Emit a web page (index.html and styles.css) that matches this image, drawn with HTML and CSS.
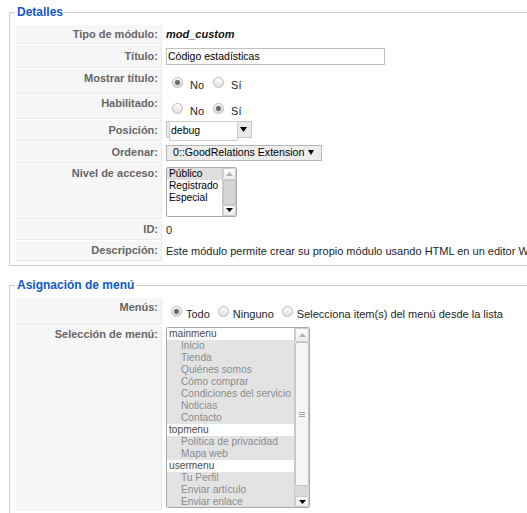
FILE: index.html
```html
<!DOCTYPE html>
<html lang="es">
<head>
<meta charset="utf-8">
<title>Módulo</title>
<link rel="stylesheet" href="styles.css">
</head>
<body>
<div class="page">
  <fieldset class="panel">
    <legend class="panel-title">Detalles</legend>
    <div class="admintable details">
      <div class="key">Tipo de módulo:</div>
      <div class="val"><strong class="type">mod_custom</strong></div>

      <div class="key">Título:</div>
      <div class="val"><span class="textbox">Código estadísticas</span></div>

      <div class="key key-top">Mostrar título:</div>
      <div class="val val-radios">
        <div class="radio-group wide">
          <span class="radio checked"></span><span class="opt-label">No</span>
          <span class="radio"></span><span class="opt-label">Sí</span>
        </div>
      </div>

      <div class="key key-top key-tight">Habilitado:</div>
      <div class="val val-radios">
        <div class="radio-group wide">
          <span class="radio"></span><span class="opt-label">No</span>
          <span class="radio checked"></span><span class="opt-label">Sí</span>
        </div>
      </div>

      <div class="key">Posición:</div>
      <div class="val">
        <div class="combo">
          <span class="combo-text">debug</span>
          <span class="combo-arrow"><svg width="7" height="5" viewBox="0 0 7 5"><path d="M0 0H7L3.5 5Z" fill="#000"/></svg></span>
        </div>
      </div>

      <div class="key">Ordenar:</div>
      <div class="val">
        <div class="select">
          <span class="select-text">0::GoodRelations Extension</span>
          <svg width="6" height="5" viewBox="0 0 6 5"><path d="M0 0H6L3 5Z" fill="#000"/></svg>
        </div>
      </div>

      <div class="key key-top">Nivel de acceso:</div>
      <div class="val">
        <div class="listbox access">
          <div class="list-items">
            <div class="item selected">Público</div>
            <div class="item">Registrado</div>
            <div class="item">Especial</div>
          </div>
          <div class="scrollbar">
            <div class="sb-btn sb-up"><svg width="7" height="4" viewBox="0 0 7 4"><path d="M0 4L3.5 0L7 4Z" fill="#b4b4b4"/></svg></div>
            <div class="sb-thumb sb-thumb-gray"></div>
            <div class="sb-btn sb-down"><svg width="7" height="4" viewBox="0 0 7 4"><path d="M0 0H7L3.5 4Z" fill="#000"/></svg></div>
          </div>
        </div>
      </div>

      <div class="key">ID:</div>
      <div class="val">0</div>

      <div class="key">Descripción:</div>
      <div class="val">Este módulo permite crear su propio módulo usando HTML en un editor WYSIWYG.</div>
    </div>
  </fieldset>

  <fieldset class="panel">
    <legend class="panel-title">Asignación de menú</legend>
    <div class="admintable menus">
      <div class="key key-top">Menús:</div>
      <div class="val val-radios">
        <div class="radio-group narrow">
          <span class="radio checked"></span><span class="opt-label">Todo</span>
          <span class="radio"></span><span class="opt-label">Ninguno</span>
          <span class="radio"></span><span class="opt-label">Selecciona item(s) del menú desde la lista</span>
        </div>
      </div>

      <div class="key key-top key-tight">Selección de menú:</div>
      <div class="val val-top">
        <div class="listbox menu">
          <div class="list-items">
            <div class="group">mainmenu</div>
            <div class="option">Inicio</div>
            <div class="option">Tienda</div>
            <div class="option">Quiénes somos</div>
            <div class="option">Cómo comprar</div>
            <div class="option">Condiciones del servicio</div>
            <div class="option">Noticias</div>
            <div class="option">Contacto</div>
            <div class="group">topmenu</div>
            <div class="option">Política de privacidad</div>
            <div class="option">Mapa web</div>
            <div class="group">usermenu</div>
            <div class="option">Tu Perfil</div>
            <div class="option">Enviar artículo</div>
            <div class="option">Enviar enlace</div>
          </div>
          <div class="scrollbar wide-sb">
            <div class="sb-btn sb-up tall"><svg width="7" height="4" viewBox="0 0 7 4"><path d="M0 4L3.5 0L7 4Z" fill="#b4b4b4"/></svg></div>
            <div class="sb-thumb sb-thumb-light"><svg width="6" height="5" viewBox="0 0 6 5"><rect x="0" y="0" width="6" height="1" fill="#a6a6a6"/><rect x="0" y="2" width="6" height="1" fill="#a6a6a6"/><rect x="0" y="4" width="6" height="1" fill="#a6a6a6"/></svg></div>
            <div class="sb-track"></div>
            <div class="sb-btn sb-down"><svg width="7" height="4" viewBox="0 0 7 4"><path d="M0 0H7L3.5 4Z" fill="#000"/></svg></div>
          </div>
        </div>
      </div>
    </div>
  </fieldset>
</div>
</body>
</html>
```

FILE: styles.css
```css
* { box-sizing: border-box; }

html, body {
  margin: 0;
  padding: 0;
  overflow: hidden;
  background: #fff;
}

body {
  font-family: "Liberation Sans", Arial, Helvetica, sans-serif;
  font-size: 11px;
  line-height: 13px;
  color: #1e1e1e;
}

.page {
  padding: 6px 0 0 9px;
  width: 820px;
}

.panel {
  margin: 0 0 13px 0;
  padding: 5px 5px 3px 5px;
  border: 1px solid #cccccc;
  width: 780px;
  min-width: 0;
}

.panel-title {
  padding: 0 2px;
  margin: 0;
  font-size: 12px;
  line-height: 13px;
  font-weight: bold;
  color: #1158c8;
}

.admintable {
  display: grid;
  grid-template-columns: 146px 1fr;
  gap: 1px;
  padding: 1px;
}

.details {
  grid-template-rows: 19px 23px 25px 24px 21px 21px 55px 20px 20px;
}

.menus {
  grid-template-rows: 27px 184px;
}

.key {
  background: #f6f6f6;
  border-right: 1px solid #e9e9e9;
  border-bottom: 1px solid #e9e9e9;
  color: #666666;
  font-weight: bold;
  padding: 0 3px 0 0;
  display: flex;
  align-items: center;
  justify-content: flex-end;
  white-space: nowrap;
}

.key-top {
  align-items: flex-start;
  padding-top: 3px;
}

.key-tight {
  padding-top: 2px;
}

.val {
  display: flex;
  align-items: center;
  padding-left: 3px;
  white-space: nowrap;
}

.val-radios {
  align-items: flex-start;
  padding-top: 8px;
}

.val-top {
  align-items: flex-start;
  padding-top: 1px;
}

.type {
  font-weight: bold;
  font-style: italic;
  color: #111;
}

/* text input */
.textbox {
  display: block;
  width: 219px;
  height: 17px;
  border: 1px solid #c0c0c0;
  padding-left: 1px;
  font-size: 10.5px;
  line-height: 15px;
  color: #000;
  background: #fff;
}

/* radios */
.radio-group {
  display: flex;
  align-items: flex-end;
}

.radio {
  flex: none;
  width: 11px;
  height: 11px;
  border: 1px solid #b9b9b9;
  border-radius: 50%;
  background: linear-gradient(#ffffff, #dedede);
  margin-bottom: 4px;
}

.radio.checked {
  background:
    radial-gradient(circle, #666 0, #6c6c6c 1.8px, #9a9a9a 2.6px, rgba(255,255,255,0) 3.2px),
    linear-gradient(#ffffff, #dedede);
}

.opt-label {
  color: #1e1e1e;
}

.wide .radio { margin-left: 9px; margin-right: 7px; }
.wide .radio:first-child { margin-left: 6px; }

.narrow .radio { margin-left: 8px; margin-right: 4px; }
.narrow .radio:first-child { margin-left: 5px; }

/* combo (Posición) */
.combo {
  align-self: flex-start;
  margin-top: 1px;
  display: flex;
  align-items: flex-start;
  width: 86px;
  height: 17px;
  border: 1px solid #c6c6c6;
  background: #e9e9e9;
  padding-left: 2px;
}

.combo-text {
  display: block;
  width: 69px;
  height: 20px;
  margin-top: -1px;
  background: #fff;
  border: 1px solid #cfcfcf;
  padding-left: 1px;
  font-size: 10.5px;
  line-height: 17px;
  color: #000;
}

.combo-arrow {
  flex: 1;
  display: flex;
  align-items: center;
  justify-content: center;
  height: 15px;
  padding-right: 2px;
}

/* select (Ordenar) */
.select {
  display: flex;
  align-items: center;
  width: 156px;
  height: 16px;
  border: 1px solid #b7b7b7;
  background: #ececec;
  padding: 0 7px 0 6px;
  font-size: 10.6px;
  color: #000;
}

.select-text {
  flex: 1;
}

/* listboxes */
.listbox {
  display: flex;
  border: 1px solid #a9a9a9;
  border-radius: 2px;
  background: #fff;
  overflow: hidden;
  font-size: 10.2px;
  line-height: 12px;
}

.listbox.access {
  width: 71px;
  height: 50px;
}

.listbox.menu {
  width: 144px;
  height: 181px;
}

.list-items {
  flex: 1;
  overflow: hidden;
}

.item {
  padding-left: 2px;
  color: #000;
}

.item.selected {
  background: #dedede;
}

.group {
  padding-left: 2px;
  color: #4a4a4a;
  background: #fff;
}

.option {
  padding-left: 14px;
  color: #8c8c8c;
  background: #e3e3e3;
}

.scrollbar {
  flex: none;
  width: 14px;
  display: flex;
  flex-direction: column;
  border-left: 1px solid #c9c9c9;
  background: #efefef;
}

.wide-sb {
  width: 15px;
}

.sb-btn {
  flex: none;
  display: flex;
  align-items: center;
  justify-content: center;
  height: 12px;
  background: linear-gradient(#fdfdfd, #ececec);
  border: 1px solid #cdcdcd;
  border-radius: 2px;
}

.sb-btn.tall {
  height: 14px;
}

.sb-down {
  height: 11px;
}

.sb-thumb {
  flex: 1;
  display: flex;
  align-items: center;
  justify-content: center;
}

.sb-thumb-gray {
  background: #d6d6d6;
  border: 1px solid #c4c4c4;
}

.sb-thumb-light {
  background: #f5f5f5;
  border: 1px solid #c8c8c8;
  border-radius: 2px;
}

.sb-track {
  flex: none;
  height: 10px;
  background: #d9d9d9;
}
```
